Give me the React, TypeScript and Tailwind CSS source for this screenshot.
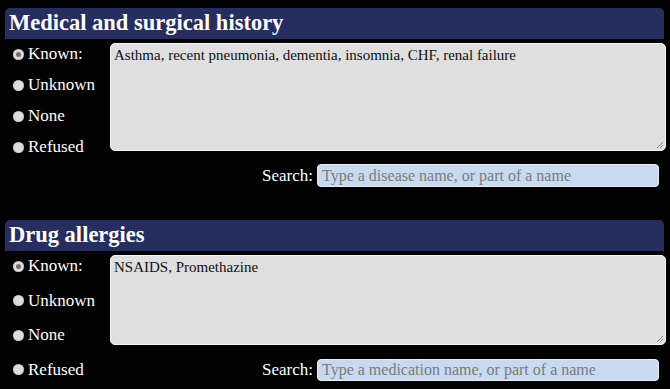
import React from "react";

type Section = {
    title: string
    text: string
    placeholder: string
    areaHeight: string
    radioGap: string
    searchGap: string
    inputHeight: string
}

const options = ['Known:', 'Unknown', 'None', 'Refused']

const Radio: React.FC<{checked: boolean}> = ({checked}) => (
    <span className="flex h-[11px] w-[11px] items-center justify-center rounded-full bg-[#dcdcdc] shadow-[inset_0_0_1px_#888]">
        {checked && <span className="h-[5px] w-[5px] rounded-full bg-[#707070]"/>}
    </span>
)

const HistorySection: React.FC<{section: Section}> = ({section}) => {
    return (
        <div>
            <div className="ml-[5px] mr-[6px] h-[31px] rounded-t-[5px] bg-[#262d5f] pl-[4px]">
                <h2 className="text-[22.5px] font-bold leading-[30px] text-white">{section.title}</h2>
            </div>
            <div className="mt-[4px] flex">
                <div className={`flex w-[110px] shrink-0 flex-col pl-[13px] ${section.radioGap}`}>
                    {options.map((option, i) => (
                        <label key={option} className="flex h-[22px] items-center gap-[4px] text-[17px] leading-[22px] text-white">
                            <Radio checked={i === 0}/>
                            <span>{option}</span>
                        </label>
                    ))}
                </div>
                <div className="flex flex-1 flex-col pr-[4px]">
                    <div className={`relative ${section.areaHeight} rounded-[5px] border border-[#f4f4f4] bg-[#dfdfdf] px-[3px] pt-[2px] text-[15px] leading-[18px] text-[#111]`}>
                        {section.text}
                        <svg className="absolute bottom-[1px] right-[1px]" width="9" height="9" viewBox="0 0 9 9">
                            <path d="M8 2 L2 8 M8 5 L5 8" stroke="#8a8a8a" strokeWidth="1"/>
                        </svg>
                    </div>
                    <div className={`flex items-center justify-end gap-[4px] pr-[7px] ${section.searchGap}`}>
                        <span className="text-[17px] leading-[22px] text-white">Search:</span>
                        <div className={`flex ${section.inputHeight} w-[342px] items-center rounded-[4px] border border-[#e6eef8] bg-[#c8daf0] px-[4px] text-[16px] text-[#7b7b7b]`}>
                            {section.placeholder}
                        </div>
                    </div>
                </div>
            </div>
        </div>
    )
}

const sections: Section[] = [
    {
        title: 'Medical and surgical history',
        text: 'Asthma, recent pneumonia, dementia, insomnia, CHF, renal failure',
        placeholder: 'Type a disease name, or part of a name',
        areaHeight: 'h-[108px]',
        radioGap: 'gap-[9px]',
        searchGap: 'mt-[13px]',
        inputHeight: 'h-[23px]',
    },
    {
        title: 'Drug allergies',
        text: 'NSAIDS, Promethazine',
        placeholder: 'Type a medication name, or part of a name',
        areaHeight: 'h-[90px]',
        radioGap: 'gap-[12.5px]',
        searchGap: 'mt-[14px]',
        inputHeight: 'h-[22px]',
    },
]

export default function App() {
    return (
        <div className="h-[389px] w-[670px] overflow-hidden bg-[#020202] pt-[8px] font-[Liberation_Serif]">
            <HistorySection section={sections[0]}/>
            <div className="h-[33px]"/>
            <HistorySection section={sections[1]}/>
        </div>
    )
}
